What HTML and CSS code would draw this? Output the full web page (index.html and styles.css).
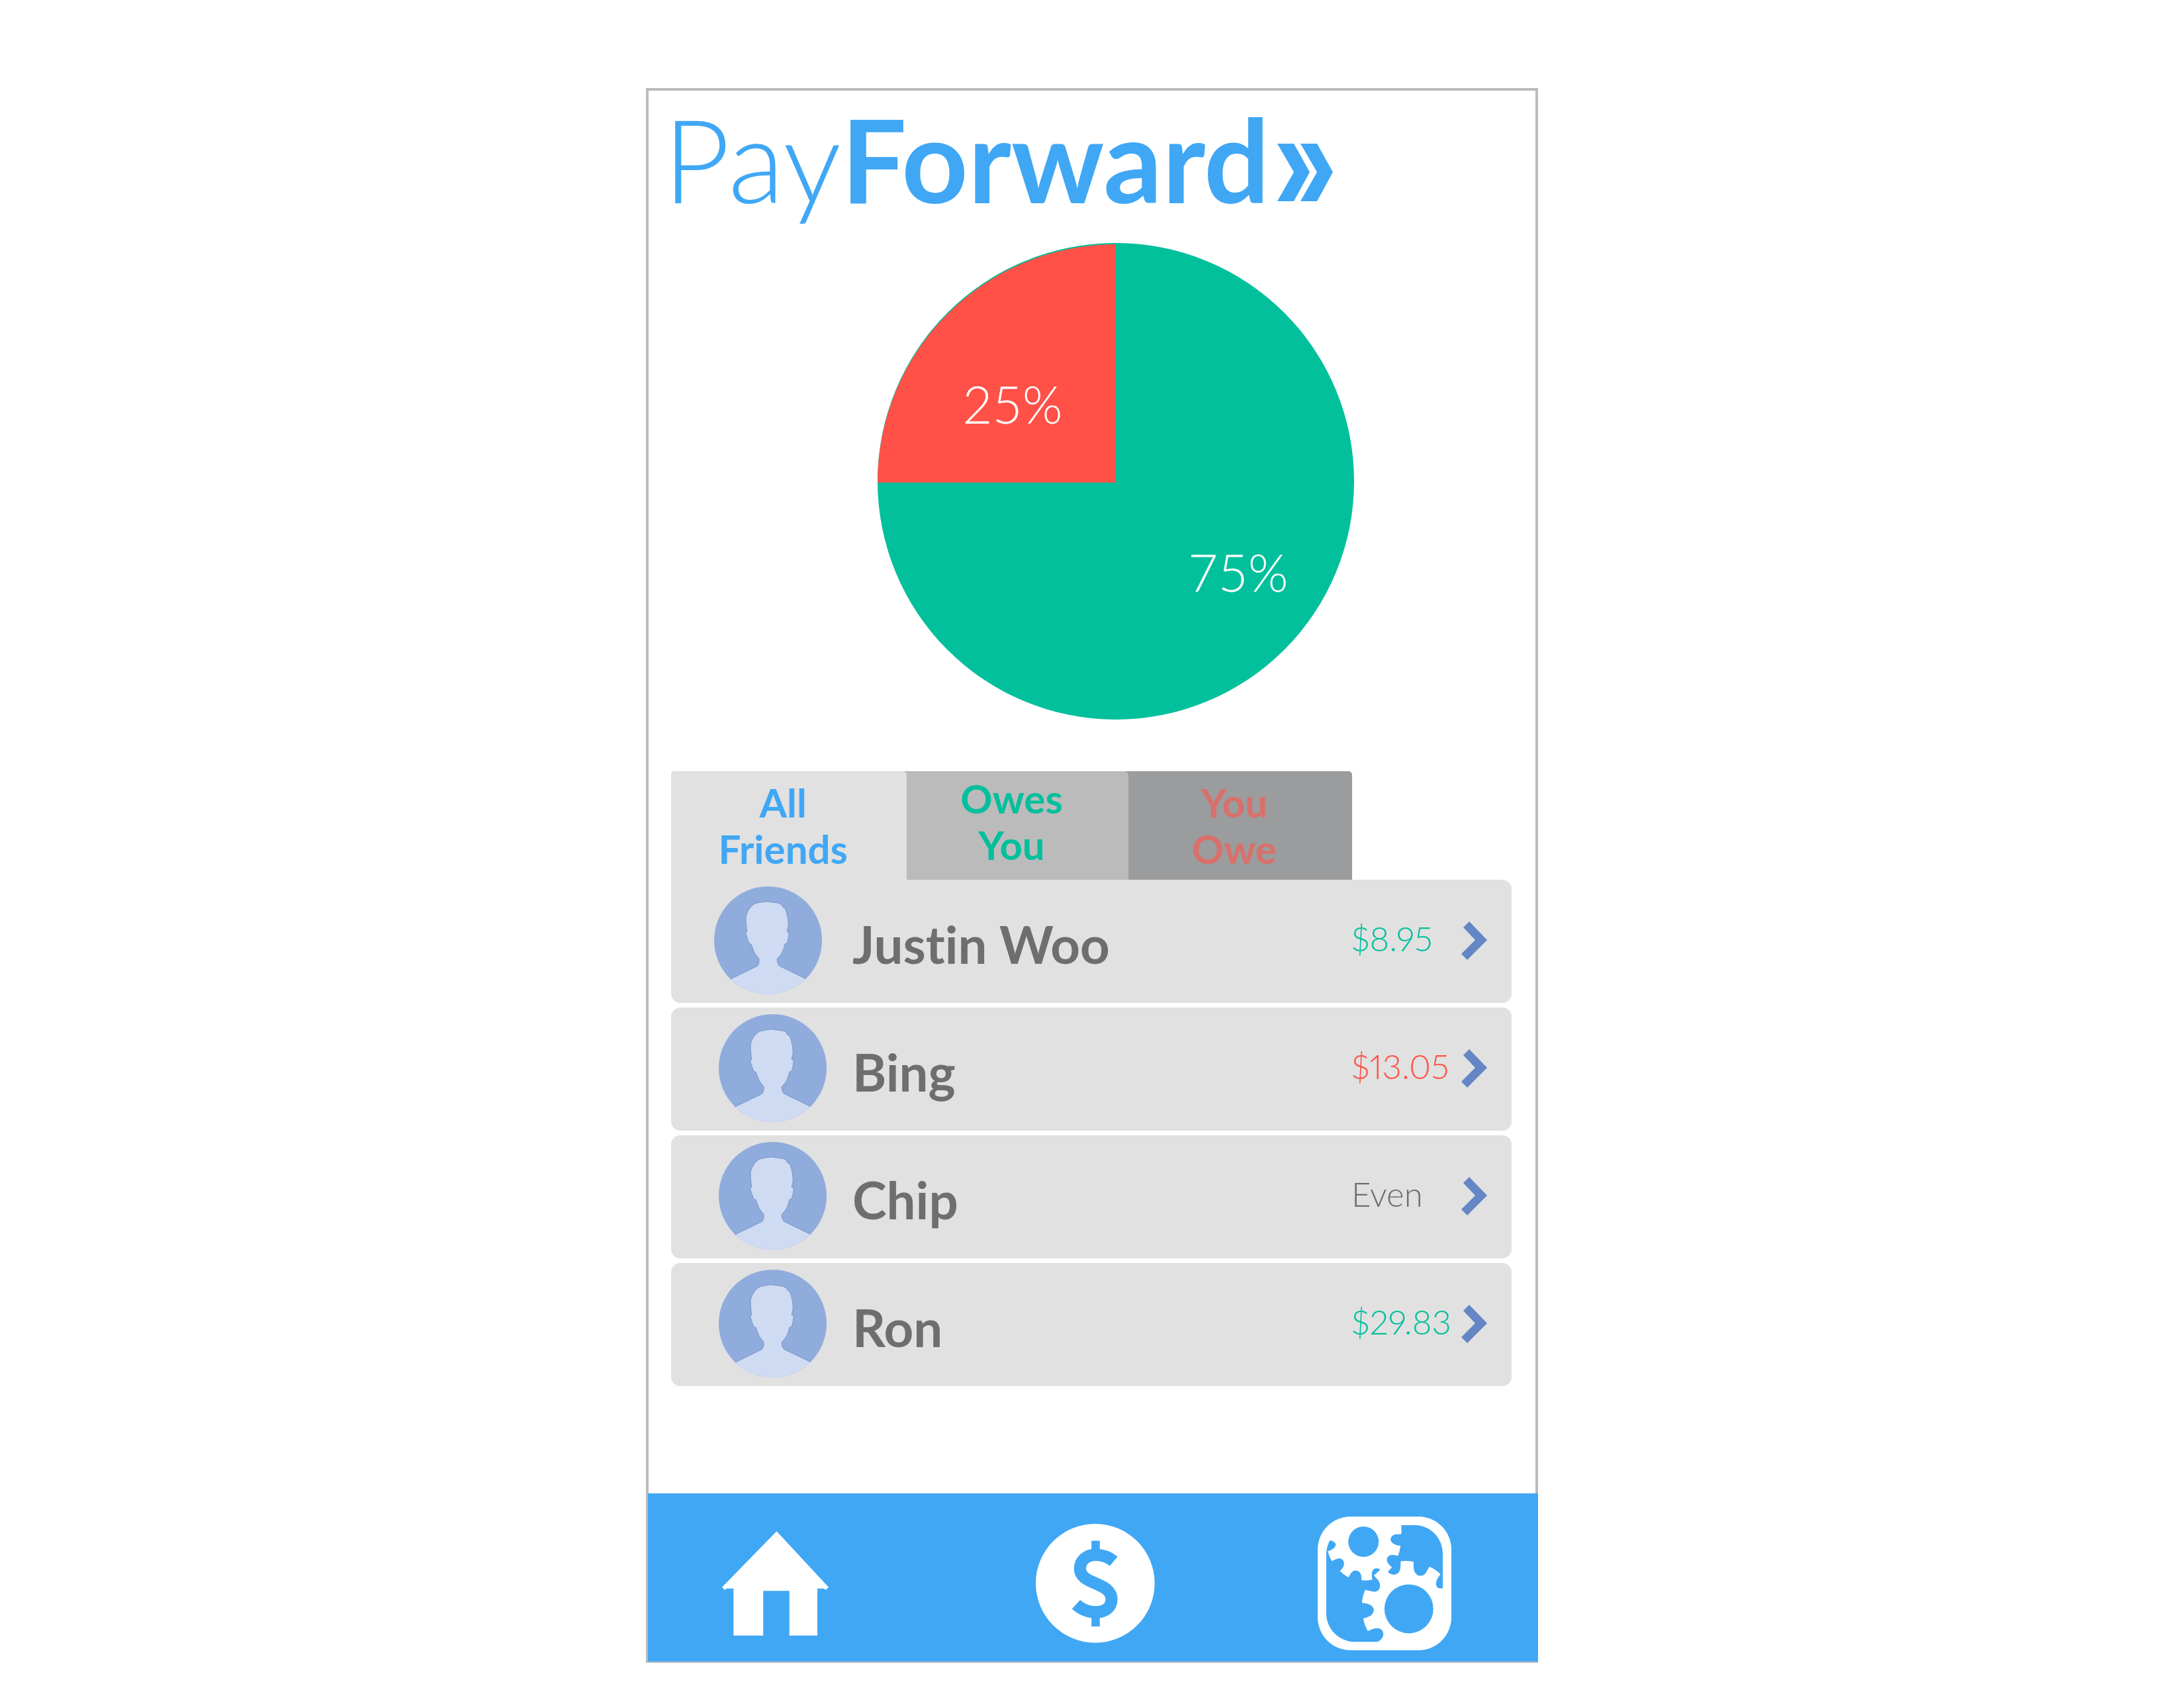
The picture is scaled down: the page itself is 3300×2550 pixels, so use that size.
FILE: index.html
```html
<!DOCTYPE html>
<html lang="en">
<head>
<meta charset="utf-8">
<meta name="viewport" content="width=device-width, initial-scale=1">
<title>PayForward</title>
<link rel="stylesheet" href="styles.css">
</head>
<body>
<svg class="sprite" aria-hidden="true">
  <symbol id="avatar" viewBox="57 58 489 489">
    <rect class="avatar-back" x="50" y="50" width="500" height="500"/>
    <path class="avatar-person" d="M31 527 L250 420 C262 412 262 400 260 385 C245 372 233 350 226 322 L215 316 C208 300 205 285 199 270 L206 262 C202 240 200 215 202 190 C210 165 222 145 240 137 C255 131 275 129 295 126 C315 130 335 131 350 134 L364 140 L367 150 L380 158 L386 178 C391 195 396 215 393 240 L388 262 L397 266 C396 285 393 302 388 316 L378 320 C372 350 362 372 343 387 C343 400 346 415 358 421 L578 527 V600 H31 Z"/>
  </symbol>
  <symbol id="chevron" viewBox="0 0 39 58">
    <path d="M12 0 L39 28 L9 58 L0 49 L21 28 L3 9 Z"/>
  </symbol>
</svg>

<main class="phone">
  <header class="brand">
    <h1 class="brand-name"><span class="brand-light">Pay</span><span class="brand-bold">Forward</span></h1>
    <svg class="brand-mark" viewBox="0 0 84 87" aria-hidden="true">
      <path d="M0 0 H25 L49 43 L25 87 H0 L25 43 Z M35 0 H60 L84 43 L60 87 H35 L60 43 Z"/>
    </svg>
  </header>

  <svg class="pie" viewBox="0 0 720 720" role="img" aria-label="75% owed to you, 25% you owe">
    <circle class="pie-owed" cx="360" cy="360" r="360"/>
    <path class="pie-owing" d="M360 362 H0 A360 360 0 0 1 360 2 Z"/>
    <text class="pie-label" x="204" y="273" text-anchor="middle">25%</text>
    <text class="pie-label" x="545" y="527" text-anchor="middle">75%</text>
  </svg>

  <div class="tabs" role="tablist">
    <button class="tab tab-all" type="button" role="tab" aria-selected="true">All<br>Friends</button>
    <button class="tab tab-owed" type="button" role="tab" aria-selected="false">Owes<br>You</button>
    <button class="tab tab-owing" type="button" role="tab" aria-selected="false">You<br>Owe</button>
  </div>

  <ul class="friends">
    <li><a class="friend friend-lead" href="#justin">
      <svg class="avatar" aria-hidden="true"><use href="#avatar"/></svg>
      <span class="name">Justin Woo</span><span class="amount owed">$8.95</span>
      <svg class="chevron" aria-hidden="true"><use href="#chevron"/></svg></a></li>
    <li><a class="friend" href="#bing">
      <svg class="avatar" aria-hidden="true"><use href="#avatar"/></svg>
      <span class="name">Bing</span><span class="amount owing">$13.05</span>
      <svg class="chevron" aria-hidden="true"><use href="#chevron"/></svg></a></li>
    <li><a class="friend" href="#chip">
      <svg class="avatar" aria-hidden="true"><use href="#avatar"/></svg>
      <span class="name">Chip</span><span class="amount">Even</span>
      <svg class="chevron" aria-hidden="true"><use href="#chevron"/></svg></a></li>
    <li><a class="friend" href="#ron">
      <svg class="avatar" aria-hidden="true"><use href="#avatar"/></svg>
      <span class="name">Ron</span><span class="amount owed">$29.83</span>
      <svg class="chevron" aria-hidden="true"><use href="#chevron"/></svg></a></li>
  </ul>

  <nav class="dock" aria-label="Main">
    <a href="#home" aria-label="Home">
      <svg class="icon-home" viewBox="90 90 484 474" aria-hidden="true">
        <path class="ink" d="M338 90 L574 344 L560 357 L553 350 H523 V564 H396 V361 H277 V564 H142 V350 H110 L103 357 L90 344 Z"/>
      </svg>
    </a>
    <a href="#pay" aria-label="Pay">
      <svg class="icon-pay" viewBox="74 62 541 541" aria-hidden="true">
        <circle class="ink" cx="344" cy="332" r="270"/>
        <path class="cut" d="M327 139 H365 V190 H327 Z M327 478 H365 V528 H327 Z"/>
        <path class="cut-line" d="M428 232 C405 213 377 203 346 203 C302 203 275 230 275 266 C275 340 418 325 418 404 C418 440 390 463 347 463 C312 463 280 449 257 428"/>
      </svg>
    </a>
    <a href="#settings" aria-label="Settings">
      <svg class="icon-settings" viewBox="93 87 607 607" aria-hidden="true">
        <rect class="ink" x="93" y="87" width="607" height="607" rx="150"/>
        <path class="cut" d="M472 126 H535 C605 126 661 185 661 255 V413 H648 C634 413 628 398 631 385 C633 371 642 360 651 349 C637 335 619 323 601 315 C592 325 589 338 581 347 C571 358 552 359 542 349 C528 338 527 315 529 292 Q500 286 470 290 C469 305 471 325 463 338 C452 355 425 355 412 338 L430 317 C418 306 407 296 407 282 C408 268 419 261 432 261 C441 261 449 263 458 265 Q466 244 469 219 C455 219 442 215 434 208 C422 198 421 184 432 174 C444 166 458 168 473 167 Q474 146 472 126 Z"/>
        <path class="cut" d="M148 195 C160 196 176 204 175 215 C173 231 154 241 139 244 Q145 268 157 289 C170 284 180 276 193 277 C209 279 214 293 212 307 C210 318 202 327 194 334 Q212 352 233 363 C239 353 244 340 255 334 C266 329 280 333 286 343 C292 352 292 364 292 376 Q317 379 341 373 C338 360 337 346 342 333 C349 320 364 320 377 328 L348 355 C361 368 376 380 376 400 C376 418 366 428 348 428 C335 428 323 422 309 420 Q296 448 294 479 C320 480 347 490 348 511 C347 535 322 546 300 549 Q304 578 321 607 C336 600 350 593 365 594 C382 595 391 606 391 620 C391 638 378 651 363 656 H265 C192 656 132 600 132 525 V260 C132 235 138 215 148 195 Z"/>
        <circle class="cut" cx="301" cy="201" r="69"/>
        <circle class="cut" cx="507" cy="506" r="111"/>
      </svg>
    </a>
  </nav>
</main>
</body>
</html>
```
FILE: styles.css
```css
:root {
  --blue: #40a7f5;
  --green: #03c09c;
  --red: #ff5148;
  --panel: #e1e1e1;
  --ink: #6d6e70;
  --line: #bbbbbb;
}

* { box-sizing: border-box; }

body {
  margin: 0;
  padding: 133px 16px 40px;
  background: #fff;
  color: var(--ink);
  font-family: Lato, "Open Sans", sans-serif;
  font-variant-ligatures: none;
}

.sprite { position: absolute; width: 0; height: 0; }

.phone {
  display: flex;
  flex-direction: column;
  max-width: 1348px;
  margin: 0 auto;
  border: 4px solid var(--line);
  border-bottom-width: 2px;
}

.brand {
  display: flex;
  align-items: flex-start;
  gap: 12px;
  padding: 2px 22px 0;
}
.brand-name {
  display: flex;
  margin: 0;
  color: var(--blue);
  font-size: 175px;
  line-height: 200px;
}
.brand-light { font-weight: 300; }
.brand-bold { font-weight: 700; }
.brand-mark { width: 84px; height: 87px; margin-top: 78px; fill: var(--blue); }

.pie {
  align-self: center;
  width: 720px;
  height: 720px;
  margin: 28px 0 0 72px;
}
.pie-owed { fill: var(--green); }
.pie-owing { fill: var(--red); }
.pie-label { fill: #fff; font-size: 78px; font-weight: 300; }

.tabs {
  display: grid;
  grid-template-columns: 356fr 334fr 338fr;
  margin: 78px 277px 0 34px;
  background: linear-gradient(to right, #bbbbbb 50%, #9b9c9d 50%);
  border-radius: 6px 6px 0 0;
}
.tab {
  padding: 12px 18px 12px 0;
  border: 0;
  border-radius: 0 6px 0 0;
  font-family: inherit;
  font-size: 60px;
  font-weight: 700;
  line-height: 70px;
  text-align: center;
}
.tab-all { background: var(--panel); color: var(--blue); border-radius: 6px 6px 0 0; }
.tab-owed { background: #bbbbbb; color: var(--green); padding-top: 6px; padding-bottom: 18px; }
.tab-owing { background: #9b9c9d; color: #d9706b; }

.friends {
  display: flex;
  flex-direction: column;
  gap: 7px;
  margin: 0 36px 0 34px;
  padding: 0;
  list-style: none;
}
.friend {
  display: grid;
  grid-template-columns: 202px 1fr 166px 39px;
  align-items: center;
  min-height: 186px;
  padding: 0 37px 0 72px;
  border-radius: 14px;
  background: var(--panel);
  color: inherit;
  text-decoration: none;
}
.friend-lead {
  grid-template-columns: 209px 1fr 166px 39px;
  padding-left: 65px;
  border-top-left-radius: 0;
}
.avatar { width: 163px; height: 163px; margin-bottom: 3px; border-radius: 50%; }
.avatar-back { fill: #90acdd; }
.avatar-person { fill: #cfdbf2; stroke: #819fcf; stroke-width: 4px; }
.name { padding-top: 8px; font-size: 78px; font-weight: 700; line-height: 90px; }
.amount {
  padding-bottom: 8px;
  font-size: 51px;
  font-weight: 300;
  font-variant-numeric: proportional-nums;
  line-height: 60px;
  white-space: nowrap;
}
.owed { color: var(--green); }
.owing { color: var(--red); }
.chevron { width: 39px; height: 58px; margin-bottom: 2px; fill: #6486c4; }

.dock {
  display: grid;
  grid-template-columns: 385fr 584fr 290fr;
  align-items: center;
  justify-items: center;
  min-height: 254px;
  margin: 162px -4px 0 -1px;
  padding: 18px 87px 0 0;
  background: var(--blue);
}
.dock a, .dock svg { display: block; }
.icon-home { width: 161px; height: 158px; }
.icon-pay { width: 180px; height: 180px; }
.icon-settings { width: 202px; height: 202px; }
.ink { fill: #fff; }
.cut { fill: var(--blue); }
.cut-line { fill: none; stroke: var(--blue); stroke-width: 55px; }
```
